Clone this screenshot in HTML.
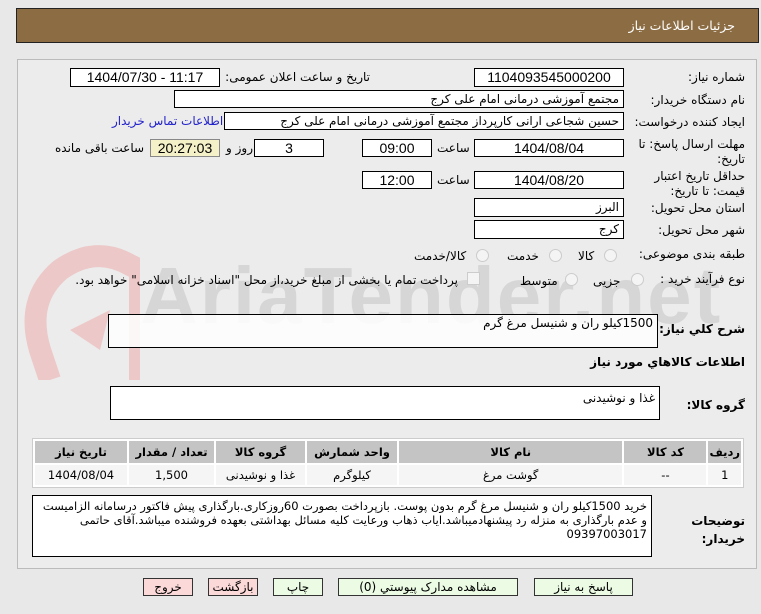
<!DOCTYPE html><html><head><meta charset="utf-8"><style>
body{margin:0;width:761px;height:614px;background:#e8e8e8;font-family:"DejaVu Sans","Noto Sans CJK SC",sans-serif;font-size:11px;color:#000;position:relative;overflow:hidden}
.a{position:absolute;white-space:nowrap}
.b{position:absolute;background:#fff;border:1px solid #000;box-sizing:border-box;padding:0 4px;line-height:16px;font-size:12px;overflow:hidden}
.n{font-family:"Liberation Sans",sans-serif;font-size:14px}
.l{position:absolute;direction:rtl;text-align:right;white-space:nowrap;font-size:12px;letter-spacing:-0.3px}
.r{position:absolute;width:11px;height:11px;border-radius:50%;border:1px solid #ccc;background:#f4f4f4}
.btn{position:absolute;top:578px;height:18px;border:1px solid #333;box-sizing:border-box;text-align:center;line-height:16px;font-size:12px;direction:rtl}
td{box-sizing:border-box;text-align:center}
</style></head><body>
<div class="a" style="left:16px;top:8px;width:743px;height:35px;background:#8b6c43;border:1px solid #222;box-sizing:border-box"></div>
<div class="l" style="right:26px;top:18px;color:#fff;font-size:12.5px">جزئیات اطلاعات نیاز</div>
<div class="a" style="left:17px;top:59px;width:740px;height:510px;border:1px solid #bbb;background:#ececec;box-sizing:border-box"></div>
<svg class="a" style="left:20px;top:240px" width="120" height="140"><path d="M30 140 L20 110 Q5 60 40 30 Q75 5 110 25 L120 30 L120 140" fill="none" stroke="#ecc8c8" stroke-width="22"/><path d="M50 90 L90 70 L80 110Z" fill="#ecc8c8"/></svg>
<div class="a" style="left:140px;top:250px;font-size:80px;color:#d6d6d6;font-family:'Liberation Sans',sans-serif;font-weight:bold;letter-spacing:2px">AriaTender.net</div>

<div class="l" style="right:16px;top:70px">شماره نیاز:</div>
<div class="b n" style="left:474px;top:68px;width:150px;height:19px;text-align:center">1104093545000200</div>
<div class="l" style="right:391px;top:70px">تاریخ و ساعت اعلان عمومی:</div>
<div class="b n" style="left:70px;top:68px;width:150px;height:19px;text-align:center">1404/07/30 - 11:17</div>
<div class="l" style="right:16px;top:93px">نام دستگاه خریدار:</div>
<div class="b" style="left:174px;top:90px;width:450px;height:18px;direction:rtl">مجتمع آموزشی درمانی امام علی کرج</div>
<div class="l" style="right:16px;top:115px">ایجاد کننده درخواست:</div>
<div class="b" style="left:224px;top:112px;width:400px;height:18px;direction:rtl;font-size:12px">حسین شجاعی ارانی کارپرداز مجتمع آموزشی درمانی امام علی کرج</div>
<div class="l" style="left:112px;top:114px;color:#2222cc">اطلاعات تماس خریدار</div>
<div class="l" style="right:16px;top:137px;line-height:15px">مهلت ارسال پاسخ: تا<br>تاریخ:</div>
<div class="b n" style="left:474px;top:139px;width:150px;height:18px;text-align:center">1404/08/04</div>
<div class="l" style="left:437px;top:141px">ساعت</div>
<div class="b n" style="left:362px;top:139px;width:70px;height:18px;text-align:center">09:00</div>
<div class="b n" style="left:254px;top:139px;width:70px;height:18px;text-align:center">3</div>
<div class="l" style="left:226px;top:141px">روز و</div>
<div class="b n" style="left:150px;top:139px;width:70px;height:18px;text-align:center;background:#f4f0c8;border-color:#888">20:27:03</div>
<div class="l" style="left:55px;top:141px">ساعت باقی مانده</div>
<div class="l" style="right:16px;top:169px;line-height:15px">حداقل تاریخ اعتبار<br>قیمت: تا تاریخ:</div>
<div class="b n" style="left:474px;top:171px;width:150px;height:18px;text-align:center">1404/08/20</div>
<div class="l" style="left:437px;top:173px">ساعت</div>
<div class="b n" style="left:362px;top:171px;width:70px;height:18px;text-align:center">12:00</div>
<div class="l" style="right:16px;top:201px">استان محل تحویل:</div>
<div class="b" style="left:474px;top:198px;width:150px;height:19px;direction:rtl">البرز</div>
<div class="l" style="right:16px;top:223px">شهر محل تحویل:</div>
<div class="b" style="left:474px;top:220px;width:150px;height:19px;direction:rtl">کرج</div>
<div class="l" style="right:16px;top:247px">طبقه بندی موضوعی:</div>
<div class="r" style="left:604px;top:249px"></div><div class="l" style="left:578px;top:249px">کالا</div>
<div class="r" style="left:549px;top:249px"></div><div class="l" style="left:507px;top:249px">خدمت</div>
<div class="r" style="left:476px;top:249px"></div><div class="l" style="left:414px;top:249px">کالا/خدمت</div>
<div class="l" style="right:16px;top:272px">نوع فرآیند خرید :</div>
<div class="r" style="left:631px;top:273px"></div><div class="l" style="left:593px;top:274px">جزیی</div>
<div class="r" style="left:565px;top:273px"></div><div class="l" style="left:520px;top:274px">متوسط</div>
<div class="a" style="left:467px;top:272px;width:11px;height:11px;border:1px solid #ccc;background:#f4f4f4"></div>
<div class="l" style="right:303px;top:273px">پرداخت تمام یا بخشی از مبلغ خرید،از محل "اسناد خزانه اسلامی" خواهد بود.</div>

<div class="l" style="right:16px;top:322px;font-weight:bold">شرح کلي نیاز:</div>
<div class="b" style="left:108px;top:314px;width:550px;height:34px;direction:rtl;background:rgba(255,255,255,.85)">1500کیلو ران و شنیسل مرغ گرم</div>
<div class="l" style="right:16px;top:355px;font-weight:bold">اطلاعات کالاهاي مورد نیاز</div>
<div class="l" style="right:16px;top:398px;font-weight:bold">گروه کالا:</div>
<div class="b" style="left:110px;top:386px;width:550px;height:34px;direction:rtl;padding-top:3px">غذا و نوشیدنی</div>

<table class="a" style="left:32px;top:438px;width:712px;height:50px;border:1px solid #ccc;border-collapse:separate;border-spacing:2px;background:#fff;font-size:11.5px;direction:rtl">
<tr style="background:#c4c4c4;font-weight:bold;height:22px"><td style="width:27px">ردیف</td><td style="width:82px">کد کالا</td><td>نام کالا</td><td style="width:90px">واحد شمارش</td><td style="width:89px">گروه کالا</td><td style="width:85px">تعداد / مقدار</td><td style="width:92px">تاریخ نیاز</td></tr>
<tr style="background:#f5f5f5;height:20px"><td>1</td><td>--</td><td>گوشت مرغ</td><td>کیلوگرم</td><td>غذا و نوشیدنی</td><td>1,500</td><td>1404/08/04</td></tr>
</table>

<div class="l" style="right:16px;top:512px;font-weight:bold;line-height:18px">توضیحات<br>خریدار:</div>
<div class="b" style="left:32px;top:495px;width:620px;height:62px;direction:rtl;white-space:normal;line-height:14px;padding-top:3px;font-size:11.5px;letter-spacing:-0.3px">خرید 1500کیلو ران و شنیسل مرغ گرم بدون پوست. بازپرداخت بصورت 60روزکاری.بارگذاری پیش فاکتور درسامانه الزامیست و عدم بارگذاری به منزله رد پیشنهادمیباشد.ایاب ذهاب ورعایت کلیه مسائل بهداشتی بعهده فروشنده میباشد.آقای حاتمی 09397003017</div>

<div class="btn" style="left:143px;width:50px;background:#fcd9d9">خروج</div>
<div class="btn" style="left:208px;width:50px;background:#fcd9d9">بازگشت</div>
<div class="btn" style="left:273px;width:50px;background:#ecfce4">چاپ</div>
<div class="btn" style="left:338px;width:180px;background:#ecfce4">مشاهده مدارک پیوستي (0)</div>
<div class="btn" style="left:534px;width:99px;background:#ecfce4">پاسخ به نیاز</div>
</body></html>
